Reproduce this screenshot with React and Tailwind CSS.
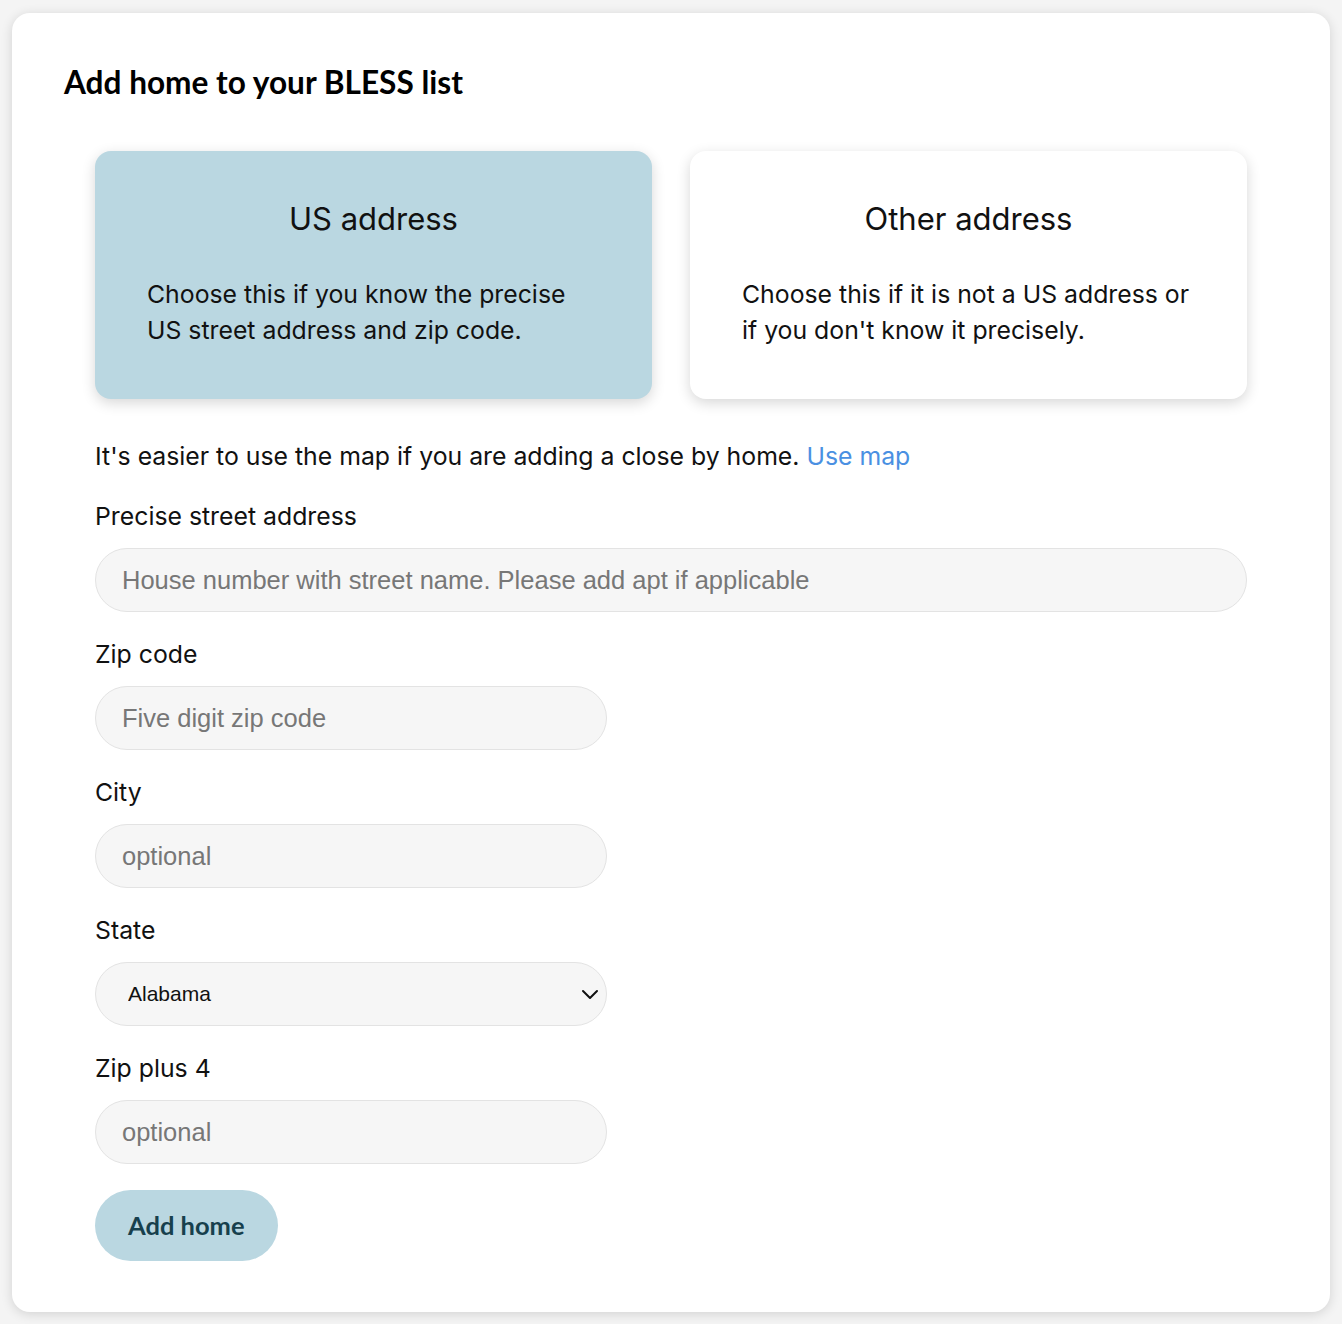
import React, { useState } from 'react';

const bodyFont = { fontFamily: 'Inter, "Noto Sans", sans-serif' };

function Field({ label, children }) {
  return (
    <div className="flex flex-col">
      <label className="text-[24.8px] leading-[32px] text-[#111]">{label}</label>
      <div className="mt-[16px]">{children}</div>
    </div>
  );
}

const inputCls =
  'h-[64px] w-full rounded-full border border-[#e3e3e3] bg-[#f6f6f6] px-[26px] text-[25.5px] text-[#111] placeholder:text-[#777] outline-none font-["Liberation_Sans",Arial,sans-serif]';

export default function App() {
  const [mode, setMode] = useState('us');

  const optionCls = (active) =>
    `flex h-[248px] flex-1 flex-col rounded-[16px] px-[52px] pt-[48px] text-left shadow-[0_4px_14px_rgba(0,0,0,0.16)] ${
      active ? 'bg-[#bad7e1]' : 'bg-white'
    }`;

  return (
    <div className="min-h-screen bg-[#f4f4f4] px-[12px] pt-[13px] pb-[12px]" style={bodyFont}>
      <div className="h-[1299px] rounded-[18px] bg-white px-[52px] pt-[49px] shadow-[0_2px_12px_rgba(0,0,0,0.14)]">
        <h1 className="text-[31.6px] font-bold leading-[40px] text-black" style={{ fontFamily: 'Lato, sans-serif' }}>
          Add home to your BLESS list
        </h1>

        <div className="px-[31px]">
          <div className="mt-[49px] flex gap-[38px]">
            <button type="button" onClick={() => setMode('us')} className={optionCls(mode === 'us')}>
              <div className="w-full text-center text-[31px] leading-[40px] text-[#111]">US address</div>
              <p className="mt-[37px] text-[24.8px] leading-[36px] text-[#111]">
                Choose this if you know the precise US street address and zip code.
              </p>
            </button>
            <button type="button" onClick={() => setMode('other')} className={optionCls(mode === 'other')}>
              <div className="w-full text-center text-[31px] leading-[40px] text-[#111]">Other address</div>
              <p className="mt-[37px] text-[24.8px] leading-[36px] text-[#111]">
                Choose this if it is not a US address or if you don't know it precisely.
              </p>
            </button>
          </div>

          <p className="mt-[41px] text-[24.8px] leading-[32px] text-[#111]">
            It's easier to use the map if you are adding a close by home.{' '}
            <a href="#" className="text-[#4a90e2]">Use map</a>
          </p>

          <div className="mt-[28px] flex flex-col gap-[26px]">
            <Field label="Precise street address">
              <input className={inputCls} placeholder="House number with street name. Please add apt if applicable" />
            </Field>
            <div className="w-[512px]">
              <Field label="Zip code">
                <input className={inputCls} placeholder="Five digit zip code" />
              </Field>
            </div>
            <div className="w-[512px]">
              <Field label="City">
                <input className={inputCls} placeholder="optional" />
              </Field>
            </div>
            <div className="w-[512px]">
              <Field label="State">
                <div className="relative">
                  <select
                    className='h-[64px] w-full appearance-none rounded-full border border-[#e3e3e3] bg-[#f6f6f6] pl-[32px] pr-[48px] text-[21px] text-[#111] outline-none font-["Liberation_Sans",Arial,sans-serif]'
                    defaultValue="Alabama"
                  >
                    <option>Alabama</option>
                    <option>Alaska</option>
                    <option>Arizona</option>
                  </select>
                  <svg
                    className="pointer-events-none absolute right-[7px] top-1/2 -translate-y-1/2"
                    width="20"
                    height="20"
                    viewBox="0 0 20 20"
                    fill="none"
                    stroke="#111"
                    strokeWidth="2"
                    strokeLinecap="round"
                    strokeLinejoin="round"
                  >
                    <path d="M3 7l7 7 7-7" />
                  </svg>
                </div>
              </Field>
            </div>
            <div className="w-[512px]">
              <Field label="Zip plus 4">
                <input className={inputCls} placeholder="optional" />
              </Field>
            </div>
          </div>

          <button
            type="button"
            className="mt-[26px] h-[71px] rounded-full bg-[#bad7e1] px-[33px] text-[25.5px] font-bold text-[#17404d]"
            style={{ fontFamily: 'Lato, sans-serif' }}
          >
            Add home
          </button>
        </div>
      </div>
    </div>
  );
}
